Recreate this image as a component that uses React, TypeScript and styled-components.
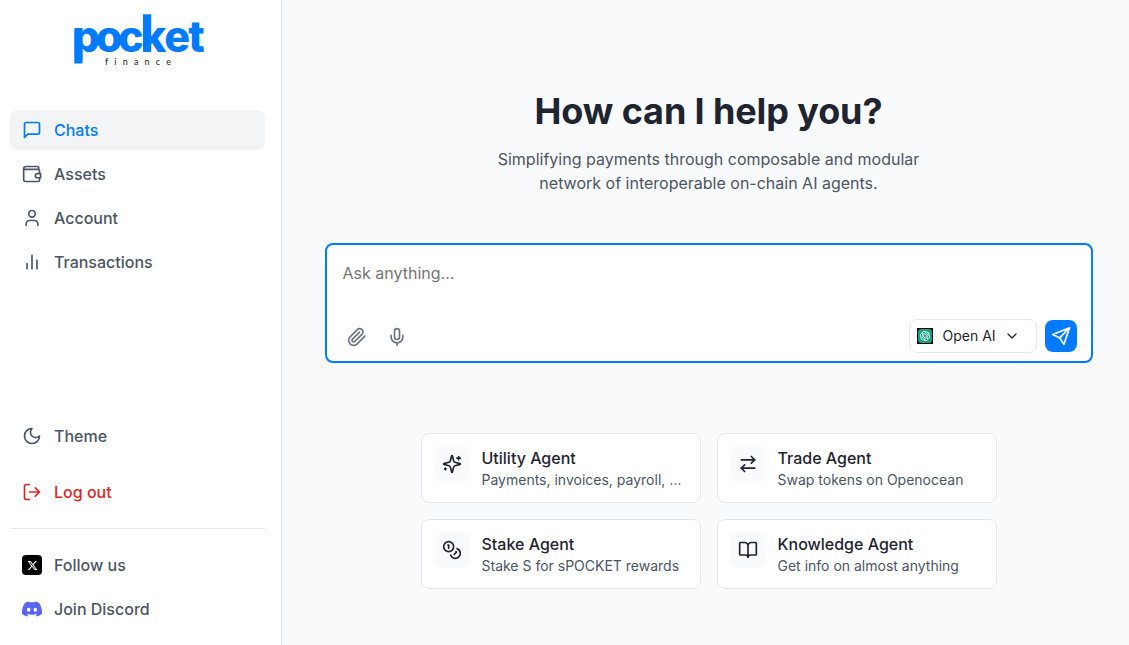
import React from "react";
import styled, { createGlobalStyle } from "styled-components";
import { Mic, ArrowRightLeft, ChevronDown } from "lucide-react";
import { SiOpenai, SiDiscord } from "react-icons/si";
import { FaXTwitter } from "react-icons/fa6";

const GlobalStyle = createGlobalStyle`
  *, *::before, *::after { box-sizing: border-box; }
  body {
    margin: 0;
    font-family: Inter, "Liberation Sans", sans-serif;
    font-size: 16px;
    line-height: 24px;
    color: #1f2430;
    background: #f9fafb;
  }
`;

const Page = styled.div`
  display: flex;
  height: 100vh;
  min-height: 645px;
  overflow: hidden;
`;

const Sidebar = styled.aside`
  display: flex;
  flex-direction: column;
  flex: none;
  width: 282px;
  padding: 10px 16px 16px 10px;
  background: #fff;
  border-right: 1px solid #e5e7eb;
`;

const Logo = styled.svg`
  display: block;
  flex: none;
  width: 150px;
  height: 60px;
  margin-left: 54px;
  overflow: visible;
`;

const Wordmark = styled.text`
  font-family: Inter, sans-serif;
  font-size: 43px;
  font-weight: 800;
  fill: #007bff;
`;

const Tagline = styled.text`
  font-family: Lato, sans-serif;
  font-size: 9px;
  font-variant-ligatures: none;
  fill: #222;
`;

const Nav = styled.nav<{ $gap?: number }>`
  display: flex;
  flex-direction: column;
  gap: ${({ $gap = 4 }) => $gap}px;
`;

const MainNav = styled(Nav)`
  margin-top: 40px;
`;

const BottomNav = styled.div`
  margin-top: auto;
`;

const NavItem = styled.a<{ $active?: boolean; $danger?: boolean }>`
  display: flex;
  align-items: center;
  gap: 12px;
  height: 40px;
  padding: 0 12px;
  border-radius: 8px;
  font-weight: 500;
  color: ${({ $active, $danger }) => ($active ? "#007bff" : $danger ? "#dc2626" : "#4b5563")};
  background: ${({ $active }) => ($active ? "#f3f4f6" : "transparent")};
`;

const Divider = styled.hr`
  height: 1px;
  margin: 16px 0;
  border: 0;
  background: #e5e7eb;
`;

const XBadge = styled.span`
  display: flex;
  align-items: center;
  justify-content: center;
  width: 20px;
  height: 20px;
  border-radius: 4px;
  color: #fff;
  background: #000;
`;

const Main = styled.main`
  display: flex;
  flex: 1;
  flex-direction: column;
  align-items: center;
  padding: 91px 36.5px 0 42.5px;
`;

const Title = styled.h1`
  margin: 0;
  font-size: 36px;
  line-height: 40px;
  font-weight: 700;
  letter-spacing: -0.12px;
  color: #1f2530;
`;

const Subtitle = styled.p`
  width: 448px;
  margin: 16px 0 0;
  text-align: center;
  color: #4b5563;
`;

const Composer = styled.section`
  display: flex;
  flex-direction: column;
  justify-content: space-between;
  width: 768px;
  height: 120px;
  margin-top: 48px;
  padding: 16px 14px 8px 16px;
  border: 2px solid #007bff;
  border-radius: 8px;
  background: #fff;
`;

const Placeholder = styled.div`
  color: #757575;
`;

const Toolbar = styled.div`
  display: flex;
  align-items: center;
  gap: 8px;
`;

const ToolButton = styled.button`
  display: flex;
  align-items: center;
  justify-content: center;
  width: 32px;
  height: 32px;
  margin: 2px 0 0 -2px;
  padding: 0;
  border: 0;
  color: #6b7280;
  background: none;

  & + & {
    margin-left: 0;
  }
`;

const ModelSelect = styled.button`
  display: flex;
  align-items: center;
  width: 128px;
  height: 34px;
  margin-left: auto;
  padding: 0 7px;
  border: 1px solid #e5e7eb;
  border-radius: 8px;
  font: 400 14px/20px Inter, sans-serif;
  color: #1f2430;
  background: #fff;
`;

const ModelLogo = styled.span`
  display: flex;
  width: 16px;
  height: 16px;
  margin-right: 10px;
  background: #000;
`;

const ModelMark = styled.span`
  display: flex;
  align-items: center;
  justify-content: center;
  width: 14px;
  height: 14px;
  margin: 1px;
  border-radius: 3px;
  color: #fff;
  background: #19a184;
`;

const ModelName = styled.span`
  margin-right: 8px;
`;

const SendButton = styled.button`
  display: flex;
  align-items: center;
  justify-content: center;
  width: 32px;
  height: 32px;
  padding: 0;
  border: 0;
  border-radius: 8px;
  color: #fff;
  background: #007bff;
`;

const Agents = styled.div`
  display: grid;
  grid-template-columns: repeat(2, 280px);
  gap: 16px;
  margin-top: 70px;
`;

const AgentCard = styled.article`
  display: flex;
  gap: 12px;
  height: 70px;
  padding: 12px;
  border: 1px solid #e5e7eb;
  border-radius: 8px;
  background: #fff;
`;

const AgentIcon = styled.span`
  display: flex;
  flex: none;
  align-items: center;
  justify-content: center;
  width: 36px;
  height: 36px;
  border-radius: 8px;
  background: #f9fafb;
`;

const AgentBody = styled.div`
  min-width: 0;
`;

const AgentName = styled.h2`
  margin: 0;
  font-size: 16px;
  line-height: 24px;
  font-weight: 500;
`;

const AgentText = styled.p`
  margin: 0;
  overflow: hidden;
  font-size: 14px;
  line-height: 20px;
  white-space: nowrap;
  text-overflow: ellipsis;
  color: #4b5563;
`;

const Stroke = ({ children }: { children: React.ReactNode }) => (
  <svg
    width={20}
    height={20}
    viewBox="0 0 24 24"
    fill="none"
    stroke="currentColor"
    strokeWidth={2}
    strokeLinecap="round"
    strokeLinejoin="round"
  >
    {children}
  </svg>
);

const agents = [
  {
    name: "Utility Agent",
    text: "Payments, invoices, payroll, and more",
    icon: (
      <Stroke>
        <path d="M9.937 15.5A2 2 0 0 0 8.5 14.063l-6.135-1.582a.5.5 0 0 1 0-.962L8.5 9.936A2 2 0 0 0 9.937 8.5l1.582-6.135a.5.5 0 0 1 .963 0L14.063 8.5A2 2 0 0 0 15.5 9.937l6.135 1.581a.5.5 0 0 1 0 .964L15.5 14.063a2 2 0 0 0-1.437 1.437l-1.582 6.135a.5.5 0 0 1-.963 0z" />
        <path d="M20 3v4M22 5h-4M4 17v2M5 18H3" />
      </Stroke>
    ),
  },
  {
    name: "Trade Agent",
    text: "Swap tokens on Openocean",
    icon: <ArrowRightLeft size={20} />,
  },
  {
    name: "Stake Agent",
    text: "Stake S for sPOCKET rewards",
    icon: (
      <Stroke>
        <circle cx="8" cy="8" r="6" />
        <path d="M18.09 10.37A6 6 0 1 1 10.34 18M7 6h1v4M16.71 13.88l.7.71-2.82 2.82" />
      </Stroke>
    ),
  },
  {
    name: "Knowledge Agent",
    text: "Get info on almost anything",
    icon: (
      <Stroke>
        <path d="M12 7v14M3 18a1 1 0 0 1-1-1V4a1 1 0 0 1 1-1h5a4 4 0 0 1 4 4 4 4 0 0 1 4-4h5a1 1 0 0 1 1 1v13a1 1 0 0 1-1 1h-6a3 3 0 0 0-3 3 3 3 0 0 0-3-3z" />
      </Stroke>
    ),
  },
];

export default function App() {
  return (
    <Page>
      <GlobalStyle />
      <Sidebar>
        <Logo viewBox="0 0 150 60">
          <Wordmark x="8.5 31.8 54 76.7 100.3 124.3" y="41.5">pocket</Wordmark>
          <rect x="10.3" y="18.6" width="8.2" height="34.9" fill="#007bff" />
          <rect x="79" y="4.3" width="8.2" height="37.2" fill="#007bff" />
          <Tagline x="41" y="54.5" textLength="66">finance</Tagline>
        </Logo>
        <MainNav>
          <NavItem $active>
            <Stroke><path d="M21 15a2 2 0 0 1-2 2H7l-4 4V5a2 2 0 0 1 2-2h14a2 2 0 0 1 2 2z" /></Stroke>
            Chats
          </NavItem>
          <NavItem>
            <Stroke>
              <path d="M20 6.5V4a1 1 0 0 0-1-1H4.5A2.5 2.5 0 0 0 2 5.5V19a2 2 0 0 0 2 2h15.5a1.5 1.5 0 0 0 1.5-1.5v-3M2.5 6.5h17A1.5 1.5 0 0 1 21 8v3.5M22.3 11.5H18.5a2.5 2.5 0 0 0 0 5h3.8z" />
            </Stroke>
            Assets
          </NavItem>
          <NavItem>
            <Stroke><path d="M19 21v-2a4 4 0 0 0-4-4H9a4 4 0 0 0-4 4v2" /><circle cx="12" cy="7" r="4" /></Stroke>
            Account
          </NavItem>
          <NavItem>
            <Stroke><path d="M18 20V10M12 20V4M6 20v-6" /></Stroke>
            Transactions
          </NavItem>
        </MainNav>
        <BottomNav>
          <Nav $gap={16}>
            <NavItem>
              <Stroke><path d="M12 3a6 6 0 0 0 9 9 9 9 0 1 1-9-9Z" /></Stroke>
              Theme
            </NavItem>
            <NavItem $danger>
              <Stroke><path d="M9 21H5a2 2 0 0 1-2-2V5a2 2 0 0 1 2-2h4M16 17l5-5-5-5M21 12H9" /></Stroke>
              Log out
            </NavItem>
          </Nav>
          <Divider />
          <Nav>
            <NavItem>
              <XBadge><FaXTwitter size={11} /></XBadge>
              Follow us
            </NavItem>
            <NavItem>
              <SiDiscord size={20} color="#5865f2" />
              Join Discord
            </NavItem>
          </Nav>
        </BottomNav>
      </Sidebar>
      <Main>
        <Title>How can I help you?</Title>
        <Subtitle>Simplifying payments through composable and modular network of interoperable on-chain AI agents.</Subtitle>
        <Composer>
          <Placeholder>Ask anything...</Placeholder>
          <Toolbar>
            <ToolButton aria-label="Attach">
              <Stroke>
                <path d="m21.44 11.05-9.19 9.19a6 6 0 0 1-8.49-8.49l8.57-8.57A4 4 0 1 1 18 8.84l-8.59 8.57a2 2 0 0 1-2.83-2.83l8.49-8.48" />
              </Stroke>
            </ToolButton>
            <ToolButton aria-label="Record"><Mic size={20} /></ToolButton>
            <ModelSelect>
              <ModelLogo><ModelMark><SiOpenai size={10} /></ModelMark></ModelLogo>
              <ModelName>Open AI</ModelName>
              <ChevronDown size={16} />
            </ModelSelect>
            <SendButton aria-label="Send">
              <Stroke><path d="M22.3 2 2 10.3l8.5 4 5 7.7zM22.3 2 10.5 14.3" /></Stroke>
            </SendButton>
          </Toolbar>
        </Composer>
        <Agents>
          {agents.map((agent) => (
            <AgentCard key={agent.name}>
              <AgentIcon>{agent.icon}</AgentIcon>
              <AgentBody>
                <AgentName>{agent.name}</AgentName>
                <AgentText>{agent.text}</AgentText>
              </AgentBody>
            </AgentCard>
          ))}
        </Agents>
      </Main>
    </Page>
  );
}
